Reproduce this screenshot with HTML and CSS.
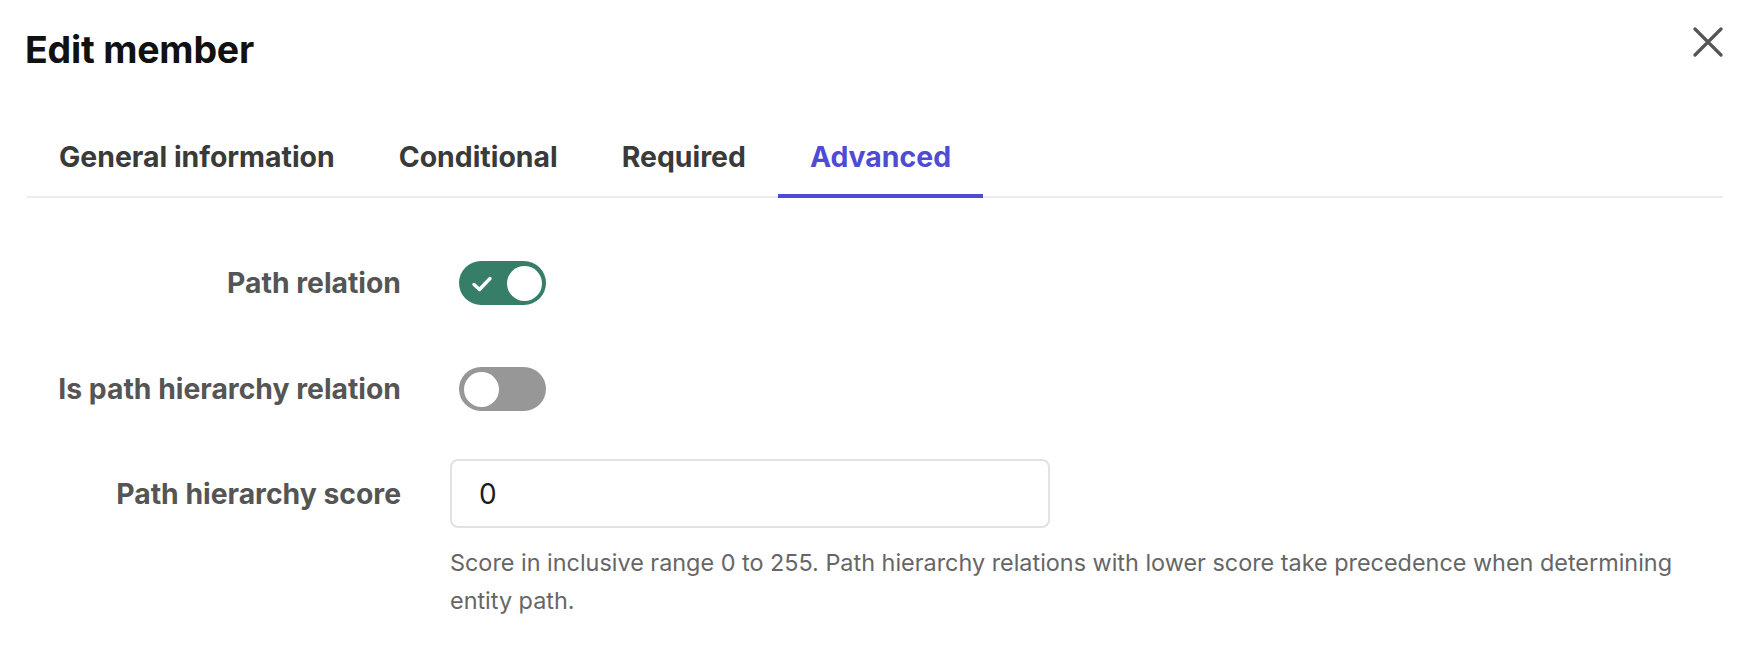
FILE: index.html
```html
<!DOCTYPE html>
<html lang="en">
<head>
<meta charset="utf-8">
<title>Edit member</title>
<link rel="stylesheet" href="styles.css">
</head>
<body>
<div class="modal">
  <header class="modal-header">
    <h1 class="modal-title">Edit member</h1>
    <button class="close-btn" aria-label="Close">
      <svg width="30" height="30" viewBox="0 0 30 30"><path d="M2 2 L28 28 M28 2 L2 28" stroke="#555" stroke-width="3.2" stroke-linecap="round" fill="none"/></svg>
    </button>
  </header>
  <nav class="tabs">
    <div class="tab">General information</div>
    <div class="tab">Conditional</div>
    <div class="tab">Required</div>
    <div class="tab tab-active">Advanced</div>
  </nav>
  <form class="form">
    <div class="row row-toggle">
      <label class="label">Path relation</label>
      <div class="control">
        <span class="toggle toggle-on">
          <svg class="check" width="22" height="18" viewBox="0 0 22 18"><path d="M3 9.5 L8.5 14.5 L19 3.5" stroke="#fff" stroke-width="3.4" stroke-linecap="round" stroke-linejoin="round" fill="none"/></svg>
          <span class="knob"></span>
        </span>
      </div>
    </div>
    <div class="row row-toggle">
      <label class="label">Is path hierarchy relation</label>
      <div class="control">
        <span class="toggle toggle-off"><span class="knob"></span></span>
      </div>
    </div>
    <div class="row row-input">
      <label class="label">Path hierarchy score</label>
      <div class="control">
        <div class="input">0</div>
      </div>
    </div>
    <div class="row row-help">
      <div></div>
      <p class="help">Score in inclusive range 0 to 255. Path hierarchy relations with lower score take precedence when determining entity path.</p>
    </div>
  </form>
</div>
</body>
</html>
```
FILE: styles.css
```css
* { box-sizing: border-box; }
html, body { margin: 0; padding: 0; background: #fff; }
body { font-family: "Inter", "Liberation Sans", sans-serif; color: #333; }

.modal { width: 1754px; height: 660px; padding: 0 31px 0 26px; }

.modal-header {
  height: 100px;
  display: flex;
  align-items: center;
  justify-content: space-between;
}
.modal-title {
  margin: 0 0 0 -1px;
  font-size: 37.5px;
  font-weight: 700;
  color: #111;
  line-height: 1;
  letter-spacing: -0.2px;
}
.close-btn {
  border: 0; background: none; padding: 0; margin: 0;
  width: 30px; height: 30px; display: flex;
  margin-top: -17px;
}

.tabs {
  display: flex;
  margin-left: 1px;
  border-bottom: 2px solid #ececec;
}
.tab {
  padding: 41px 32px 21px 32px;
  font-size: 28.4px;
  line-height: 32px;
  font-weight: 700;
  color: #3a3a3a;
  border-bottom: 4px solid transparent;
  margin-bottom: -2px;
}
.tab-active { color: #4f4bd4; border-bottom-color: #4f4bd4; }

.form { padding-top: 63px; }
.row {
  display: grid;
  grid-template-columns: 375px 1fr;
  column-gap: 49px;
  align-items: center;
}
.row-toggle + .row-toggle { margin-top: 62px; }
.row-input { margin-top: 48px; }
.row-help { margin-top: 16px; align-items: start; }

.label {
  text-align: right;
  font-size: 28.3px;
  font-weight: 700;
  color: #555;
  line-height: 32px;
}

.toggle {
  margin-left: 9px;
  width: 87px; height: 44px;
  border-radius: 22px;
  display: flex;
  align-items: center;
  padding: 0 4px;
  position: relative;
}
.toggle-on { background: #377e68; justify-content: space-between; padding-left: 12px; }
.toggle-off { background: #979797; justify-content: flex-start; padding-left: 5px; }
.knob { width: 35px; height: 35px; border-radius: 50%; background: #fff; }
.check { display: block; margin-top: 1px; }

.input {
  width: 600px; height: 69px;
  border: 2px solid #e2e2e2;
  border-radius: 8px;
  padding-left: 27px;
  display: flex; align-items: center;
  font-size: 28px;
  color: #1d1d1d;
}

.help {
  margin: 0;
  font-size: 23.4px;
  line-height: 38px;
  color: #666;
  max-width: 1260px;
}
```
